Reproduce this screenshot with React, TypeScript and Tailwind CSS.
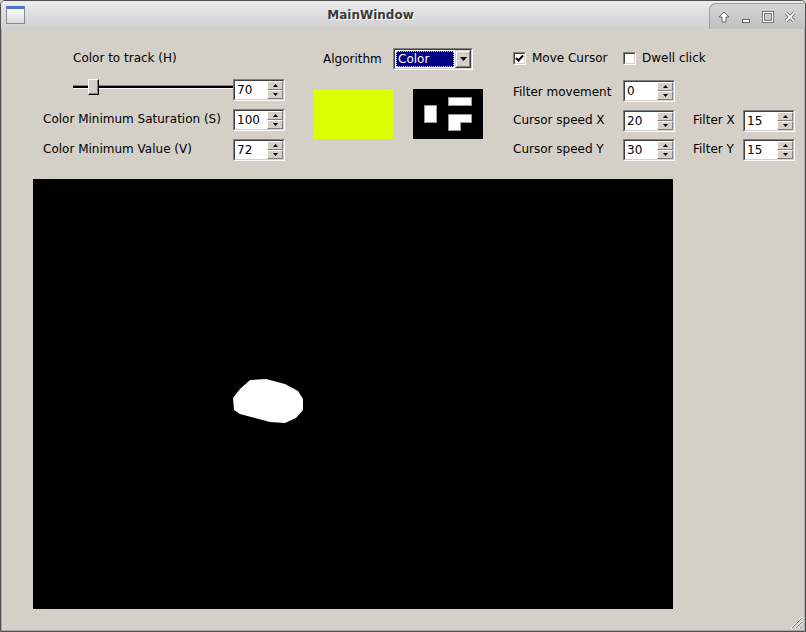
import React from "react";

type Kids = { className?: string; children?: React.ReactNode };

const Sunken = ({ className = "", children }: Kids) => (
  <div
    className={`border border-t-[#808080] border-l-[#808080] border-b-white border-r-white ${className}`}
  >
    <div className="h-full w-full flex bg-white border border-t-[#404040] border-l-[#404040] border-b-[#d4d0c8] border-r-[#d4d0c8]">
      {children}
    </div>
  </div>
);

const Raised = ({ className = "", children }: Kids) => (
  <div
    className={`border border-t-[#d4d0c8] border-l-[#d4d0c8] border-b-[#404040] border-r-[#404040] ${className}`}
  >
    <div className="h-full w-full flex items-center justify-center bg-[#d4d0c8] border border-t-white border-l-white border-b-[#808080] border-r-[#808080]">
      {children}
    </div>
  </div>
);

const SpinArrow = ({ up }: { up?: boolean }) => (
  <div className="flex-1 flex items-center justify-center bg-[#d4d0c8] border border-t-white border-l-white border-b-[#808080] border-r-[#808080]">
    <svg width="5" height="3" viewBox="0 0 5 3">
      <path d={up ? "M2.5 0L5 3H0Z" : "M0 0H5L2.5 3Z"} fill="#000" />
    </svg>
  </div>
);

const SpinBox = ({ value }: { value: string }) => (
  <Sunken className="w-[52px] h-[22px] shrink-0">
    <span className="flex-1 pl-[2px] leading-[18px]">{value}</span>
    <div className="w-[16px] flex flex-col">
      <SpinArrow up />
      <SpinArrow />
    </div>
  </Sunken>
);

const CheckBox = ({ checked }: { checked?: boolean }) => (
  <Sunken className="w-[13px] h-[13px] shrink-0">
    {checked && (
      <svg width="9" height="9" viewBox="0 0 9 9">
        <polyline points="1,4 3.5,6.5 8,1.5" fill="none" stroke="#000" strokeWidth="2" />
      </svg>
    )}
  </Sunken>
);

const TitleIcon = ({ kind }: { kind: string }) => (
  <svg width="12" height="12" viewBox="0 0 12 12">
    {kind === "up" && (
      <path d="M6 1L11 6H8V11H4V6H1Z" fill="#fff" stroke="#666" strokeWidth="1" />
    )}
    {kind === "min" && <rect x="2.5" y="8.5" width="7" height="3" fill="#fff" stroke="#666" />}
    {kind === "max" && (
      <>
        <rect x="1.5" y="1.5" width="9" height="9" fill="none" stroke="#666" strokeWidth="3" />
        <rect x="1.5" y="1.5" width="9" height="9" fill="none" stroke="#fff" strokeWidth="1.2" />
      </>
    )}
    {kind === "close" && (
      <>
        <path d="M2 2L10 10M10 2L2 10" stroke="#666" strokeWidth="3.6" />
        <path d="M2 2L10 10M10 2L2 10" stroke="#fff" strokeWidth="1.8" />
      </>
    )}
  </svg>
);

export default function App() {
  return (
    <div className="w-[806px] h-[632px] bg-[#d4d0c8] font-['DejaVu_Sans',sans-serif] text-[12px] text-black">
      <div className="h-full flex flex-col border border-[#505050] rounded-t-[5px] overflow-hidden">
        {/* title bar */}
        <div className="h-[28px] shrink-0 flex bg-linear-to-b from-[#ececec] to-[#cfcfcf]">
          <div className="w-[31px] flex items-center pl-[5px]">
            <div className="w-[19px] h-[18px] border border-[#8a8a8a] border-t-[3px] border-t-[#4a78c0] bg-linear-to-b from-[#fafafa] to-[#dcdcdc]" />
          </div>
          <div className="flex-1 flex items-center justify-center font-bold text-[#3a3a3a] [text-shadow:1px_1px_0_#ffffff]">
            MainWindow
          </div>
          <div className="self-end h-[26px] w-[96px] rounded-tl-[7px] border-l border-t border-[#a0a0a0] bg-linear-to-b from-[#d4d4d4] to-[#c0c0c0] flex items-center pl-[8px] gap-[10px]">
            <TitleIcon kind="up" />
            <TitleIcon kind="min" />
            <TitleIcon kind="max" />
            <TitleIcon kind="close" />
          </div>
        </div>

        {/* body */}
        <div className="flex-1 relative flex flex-col border-x border-b border-[#a8a8a8] bg-[#d4d0c8]">
          <div className="h-[150px] shrink-0 flex items-start">
            {/* HSV group */}
            <div className="ml-[41px] mt-[21px] w-[242px] flex flex-col">
              <div className="h-[16px] leading-[16px] pl-[30px]">Color to track (H)</div>
              <div className="mt-[13px] h-[22px] flex items-start">
                <div className="ml-[30px] w-[160px] h-[16px] relative flex items-center">
                  <div className="w-full h-[4px] bg-black border-t border-t-[#808080] border-b border-b-white" />
                  <div className="absolute left-[15px] top-0 w-[11px] h-[16px] border border-t-white border-l-white border-b-black border-r-black">
                    <div className="h-full w-full bg-[#d4d0c8] border-b border-r border-[#808080]" />
                  </div>
                </div>
                <SpinBox value="70" />
              </div>
              <div className="mt-[8px] h-[22px] flex items-center justify-between">
                <span className="mb-[2px]">Color Minimum Saturation (S)</span>
                <SpinBox value="100" />
              </div>
              <div className="mt-[8px] h-[22px] flex items-center justify-between">
                <span className="mb-[2px]">Color Minimum Value (V)</span>
                <SpinBox value="72" />
              </div>
            </div>

            {/* algorithm group */}
            <div className="ml-[28px] mt-[19px] w-[170px] flex flex-col">
              <div className="h-[22px] flex items-center">
                <span className="w-[80px] pl-[10px]">Algorithm</span>
                <Sunken className="w-[80px] h-[22px]">
                  <div className="flex-1 m-[1px] bg-[#000080] border border-dotted border-[#c0c0ff] text-white pl-[1px] leading-[14px]">
                    Color
                  </div>
                  <Raised className="w-[16px] h-full">
                    <svg width="7" height="4" viewBox="0 0 7 4">
                      <path d="M0 0H7L3.5 4Z" fill="#000" />
                    </svg>
                  </Raised>
                </Sunken>
              </div>
              <div className="mt-[19px] flex gap-[20px]">
                <div className="w-[80px] h-[50px] bg-[#d9ff00]" />
                <svg width="70" height="50" viewBox="0 0 70 50">
                  <rect width="70" height="50" fill="#000" />
                  <g fill="#fff" stroke="#9a9a9a" strokeWidth="1">
                    <rect x="11.5" y="16.5" width="12" height="17" />
                    <rect x="35.5" y="8.5" width="23" height="8" />
                    <path d="M35.5 25.5H58.5V33.5H47.5V41.5H35.5Z" />
                  </g>
                </svg>
              </div>
            </div>

            {/* cursor group */}
            <div className="ml-[30px] mt-[21px] w-[282px] flex flex-col">
              <div className="h-[16px] flex items-center">
                <div className="w-[110px] flex items-center gap-[6px]">
                  <CheckBox checked />
                  <span>Move Cursor</span>
                </div>
                <div className="flex items-center gap-[6px]">
                  <CheckBox />
                  <span>Dwell click</span>
                </div>
              </div>
              <div className="mt-[14px] h-[22px] flex items-center">
                <span className="w-[110px] mt-[2px]">Filter movement</span>
                <SpinBox value="0" />
              </div>
              <div className="mt-[8px] h-[22px] flex items-center">
                <span className="w-[110px] mb-[2px]">Cursor speed X</span>
                <SpinBox value="20" />
                <span className="ml-[18px] w-[50px] mb-[2px]">Filter X</span>
                <SpinBox value="15" />
              </div>
              <div className="mt-[7px] h-[22px] flex items-center">
                <span className="w-[110px] mb-[2px]">Cursor speed Y</span>
                <SpinBox value="30" />
                <span className="ml-[18px] w-[50px] mb-[2px]">Filter Y</span>
                <SpinBox value="15" />
              </div>
            </div>
          </div>

          {/* camera view */}
          <svg className="ml-[31px] shrink-0" width="640" height="430" viewBox="0 0 640 430">
            <rect width="640" height="430" fill="#000" />
            <path
              d="M217 201L233 200L252 205L265 212L270 220L270 231L263 239L252 244L237 243L222 239L207 235L201 231L200 219L207 210Z"
              fill="#fff"
            />
          </svg>

          <svg className="absolute right-[1px] bottom-[1px]" width="14" height="14" viewBox="0 0 14 14">
            <g strokeWidth="1">
              <path d="M13 2L2 13" stroke="#fff" />
              <path d="M13 3L3 13" stroke="#808080" />
              <path d="M13 6L6 13" stroke="#fff" />
              <path d="M13 7L7 13" stroke="#808080" />
              <path d="M13 10L10 13" stroke="#fff" />
              <path d="M13 11L11 13" stroke="#808080" />
            </g>
          </svg>
        </div>
      </div>
    </div>
  );
}
